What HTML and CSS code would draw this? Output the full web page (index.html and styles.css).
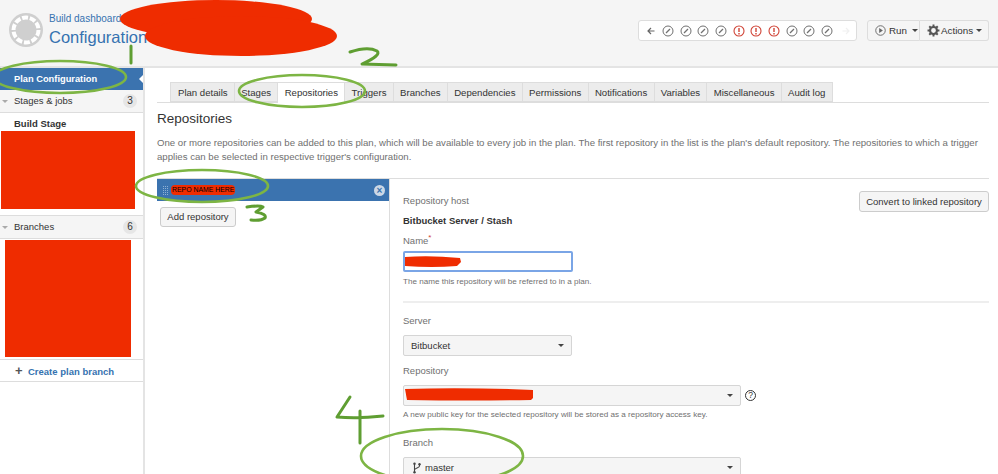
FILE: index.html
```html
<!DOCTYPE html>
<html lang="en">
<head>
    <meta charset="utf-8">
    <title>Configuration</title>
    <link rel="stylesheet" href="styles.css">
</head>
<body>
    <svg class="icon-defs" width="0" height="0">
        <symbol id="ok" viewBox="0 0 12 12">
            <circle cx="6" cy="6" r="5" fill="none" stroke="#707070" stroke-width="1"/>
            <path d="M4 8l4-4" stroke="#707070" stroke-width="1.3"/>
        </symbol>
        <symbol id="fail" viewBox="0 0 12 12">
            <circle cx="6" cy="6" r="5" fill="none" stroke="#d04437" stroke-width="1.1"/>
            <path d="M6 3v4M6 8v1.4" stroke="#d04437" stroke-width="1.4"/>
        </symbol>
    </svg>

    <header class="top">
        <div class="plan-logo">
            <svg width="34" height="34" viewBox="0 0 34 34">
                <circle cx="17" cy="17" r="17" fill="#cfcfcf"/>
                <circle cx="17" cy="17" r="12.5" fill="none" stroke="#fff" stroke-width="4" stroke-dasharray="6 1.8"/>
                <circle cx="17" cy="17" r="8" fill="#cfcfcf"/>
            </svg>
        </div>
        <div class="plan-title">
            <a class="crumb" href="#">Build dashboard</a>
            <h1>Configuration</h1>
        </div>
        <div class="top-right">
            <div class="history">
                <svg class="arrow" viewBox="0 0 10 10"><path d="M8.5 5H2M5 2L2 5l3 3" fill="none" stroke="#666" stroke-width="1.2"/></svg>
                <svg class="st"><use href="#ok"/></svg>
                <svg class="st"><use href="#ok"/></svg>
                <svg class="st"><use href="#ok"/></svg>
                <svg class="st"><use href="#ok"/></svg>
                <svg class="st"><use href="#fail"/></svg>
                <svg class="st"><use href="#fail"/></svg>
                <svg class="st"><use href="#fail"/></svg>
                <svg class="st"><use href="#ok"/></svg>
                <svg class="st"><use href="#ok"/></svg>
                <svg class="st"><use href="#ok"/></svg>
                <svg class="arrow next" viewBox="0 0 10 10"><path d="M1.5 5H8M5 2l3 3-3 3" fill="none" stroke="#f0f0f0" stroke-width="1.2"/></svg>
            </div>
            <div class="btn-group">
                <button class="tool-btn">
                    <svg width="11" height="11" viewBox="0 0 12 12"><circle cx="6" cy="6" r="5.2" fill="none" stroke="#666"/><path d="M4.6 3.4v5.2L8.6 6z" fill="#666"/></svg>
                    Run <i class="caret"></i>
                </button>
                <button class="tool-btn">
                    <svg width="13" height="13" viewBox="0 0 12 12"><circle cx="6" cy="6" r="3.2" fill="none" stroke="#555" stroke-width="2"/><path d="M6 .5v2M6 9.5v2M.5 6h2M9.5 6h2M2.1 2.1l1.4 1.4M8.5 8.5l1.4 1.4M2.1 9.9l1.4-1.4M8.5 3.5l1.4-1.4" stroke="#555" stroke-width="1.8"/></svg>
                    Actions <i class="caret"></i>
                </button>
            </div>
        </div>
    </header>

    <div class="page">
        <nav class="side">
            <a class="side-active" href="#">Plan Configuration</a>
            <div class="side-head"><i class="side-caret"></i>Stages &amp; jobs<span class="count">3</span></div>
            <div class="stage-list">
                <strong>Build Stage</strong>
            </div>
            <div class="side-head"><i class="side-caret"></i>Branches<span class="count">6</span></div>
            <div class="branch-list"></div>
            <a class="create-branch" href="#"><span class="plus">+</span>Create plan branch</a>
        </nav>

        <main class="main">
            <ul class="tabs">
                <li>Plan details</li>
                <li>Stages</li>
                <li class="current">Repositories</li>
                <li>Triggers</li>
                <li>Branches</li>
                <li>Dependencies</li>
                <li>Permissions</li>
                <li>Notifications</li>
                <li>Variables</li>
                <li>Miscellaneous</li>
                <li>Audit log</li>
            </ul>
            <h2>Repositories</h2>
            <p class="intro">One or more repositories can be added to this plan, which will be available to every job in the plan. The first repository in the list is the plan's default repository. The repositories to which a trigger applies can be selected in respective trigger's configuration.</p>

            <div class="repo-panel">
                <div class="repo-list">
                    <div class="repo-item">
                        <i class="grip"></i>
                        <span class="repo-name">REPO NAME HERE</span>
                        <span class="repo-close">&#215;</span>
                    </div>
                    <button class="btn add-repo">Add repository</button>
                </div>

                <form class="repo-form">
                    <button type="button" class="btn convert">Convert to linked repository</button>
                    <div class="label">Repository host</div>
                    <div class="host">Bitbucket Server / Stash</div>
                    <div class="label">Name<sup>*</sup></div>
                    <div class="text-input"></div>
                    <div class="hint">The name this repository will be referred to in a plan.</div>
                    <hr>
                    <div class="label select-label">Server</div>
                    <div class="select short">Bitbucket<i class="caret"></i></div>
                    <div class="label select-label">Repository</div>
                    <div class="select-row">
                        <div class="select long"><i class="caret"></i></div>
                        <span class="help">?</span>
                    </div>
                    <div class="hint key-hint">A new public key for the selected repository will be stored as a repository access key.</div>
                    <div class="label select-label branch-label">Branch</div>
                    <div class="select long">
                        <span class="branch-name">
                            <svg width="10" height="12" viewBox="0 0 10 12"><path d="M2.5 1.5v9M7.5 2.5v1.5C7.5 6 2.5 6 2.5 8" fill="none" stroke="#444" stroke-width="1.1"/><circle cx="2.5" cy="1.8" r="1.2" fill="#444"/><circle cx="7.5" cy="2.2" r="1.2" fill="#444"/><circle cx="2.5" cy="10.2" r="1.2" fill="#444"/></svg>
                            master
                        </span>
                        <i class="caret"></i>
                    </div>
                </form>
            </div>
        </main>
    </div>

    <!-- redactions and hand drawn notes sit over the page -->
    <svg class="overlay" width="998" height="474" viewBox="0 0 998 474">
        <g fill="#ef2c00">
            <ellipse cx="216" cy="19" rx="96" ry="19"/>
            <ellipse cx="241" cy="36" rx="96" ry="20"/>
            <rect x="1" y="131" width="134" height="78"/>
            <rect x="5" y="240" width="126" height="117"/>
            <path d="M405 257q25-2 55 1l1 4-4 4q-25 2-52 0z"/>
            <path d="M405 389q60-2 128 1v8l-2 2q-60 1-124 0z"/>
        </g>
        <g fill="none" stroke="#7db544" stroke-width="2.6">
            <ellipse cx="60" cy="77" rx="66" ry="16"/>
            <ellipse cx="302" cy="91" rx="63" ry="16"/>
            <ellipse cx="202" cy="186" rx="66" ry="16"/>
            <ellipse cx="442" cy="456" rx="81" ry="27"/>
        </g>
        <g fill="none" stroke="#5f9e32" stroke-width="3" stroke-linecap="round" stroke-linejoin="round">
            <path d="M131 46v17"/>
            <path d="M350 52q18-6 27-1 5 4-15 13l34 1"/>
            <path d="M247 207q13-2 16 0l-7 5q11 2 9 6-4 3-14 2"/>
            <path d="M350 397l-13 20q20 2 46-1M360 411v32"/>
        </g>
    </svg>
</body>
</html>
```

FILE: styles.css
```css
:root {
    --blue: #3b73af;
    --link: #3572b0;
    --text: #333;
    --muted: #707070;
    --line: #ddd;
    --panel: #f5f5f5;
}

* {
    box-sizing: border-box;
}

html, body {
    height: 474px;
    overflow: hidden;
}

body {
    margin: 0;
    background: #fff;
    color: var(--text);
    font-family: "Liberation Sans", Arial, sans-serif;
    font-size: 9.5px;
    line-height: 14px;
}

.icon-defs {
    display: block;
    height: 0;
}

.top {
    display: flex;
    height: 68px;
    padding: 13px 9px 0 9px;
    background: var(--panel);
    border-bottom: 2px solid #e4e4e4;
}

.plan-logo {
    width: 40px;
    height: 34px;
}

.plan-title {
    margin-top: -1px;
}

.crumb {
    display: block;
    color: var(--link);
    font-size: 10px;
    line-height: 14px;
    text-decoration: none;
}

h1 {
    margin: 0;
    color: var(--link);
    font-size: 16.5px;
    font-weight: normal;
    line-height: 22px;
}

.top-right {
    display: flex;
    gap: 10px;
    margin-left: auto;
    margin-top: 7px;
    height: 21px;
}

.history {
    display: flex;
    align-items: center;
    width: 219px;
    height: 21px;
    padding: 0 7px;
    background: #fff;
    border: 1px solid var(--line);
    border-radius: 3px;
}

.arrow {
    flex: none;
    width: 10px;
    height: 10px;
    margin-right: 6px;
}

.arrow.next {
    margin: 0 0 0 2px;
}

.st {
    flex: none;
    width: 12px;
    height: 12px;
    margin-right: 5.67px;
}

.btn-group {
    display: flex;
}

.tool-btn {
    display: flex;
    align-items: center;
    gap: 3px;
    height: 21px;
    padding: 0 7px;
    background: var(--panel);
    border: 1px solid var(--line);
    color: var(--text);
    font: inherit;
    font-size: 9.8px;
}

.tool-btn svg {
    flex: none;
}

.tool-btn:first-child {
    width: 53px;
    border-radius: 3px 0 0 3px;
}

.tool-btn:last-child {
    width: 69px;
    padding: 0 4px 0 7px;
    gap: 1px;
    border-left: 0;
    border-radius: 0 3px 3px 0;
}

.caret {
    display: inline-block;
    margin-left: 2px;
    border-top: 3px solid #444;
    border-left: 3px solid transparent;
    border-right: 3px solid transparent;
}

.page {
    display: flex;
    height: 406px;
}

.side {
    flex: none;
    width: 145px;
    border-right: 2px solid #e4e4e4;
}

.side-active {
    position: relative;
    display: block;
    height: 22px;
    padding-left: 14px;
    background: var(--blue);
    color: #fff;
    font-size: 9.3px;
    font-weight: bold;
    line-height: 22px;
    text-decoration: none;
}

.side-active::after {
    content: "";
    position: absolute;
    right: 0;
    top: 7px;
    border-right: 4px solid #fff;
    border-top: 4px solid transparent;
    border-bottom: 4px solid transparent;
}

.side-head {
    display: flex;
    align-items: center;
    height: 23px;
    padding: 0 6px 0 2px;
    background: var(--panel);
    border-bottom: 1px solid var(--line);
}

.side-caret {
    width: 0;
    margin-right: 6px;
    border-top: 3px solid #aaa;
    border-left: 3px solid transparent;
    border-right: 3px solid transparent;
}

.count {
    width: 14px;
    height: 14px;
    margin-left: auto;
    background: #e6e6e6;
    border-radius: 50%;
    font-size: 10px;
    line-height: 14px;
    text-align: center;
}

.stage-list {
    height: 103px;
    padding: 4px 14px;
    border-bottom: 1px solid var(--line);
}

.branch-list {
    height: 120px;
}

.create-branch {
    display: block;
    height: 23px;
    padding-left: 15px;
    border-top: 1px solid var(--line);
    border-bottom: 1px solid var(--line);
    color: var(--link);
    font-weight: bold;
    line-height: 21px;
    text-decoration: none;
}

.plus {
    display: inline-block;
    width: 13px;
    color: #555;
    font-size: 13px;
}

.main {
    flex: 1;
    min-width: 0;
    padding: 14px 9px 0 12px;
}

.tabs {
    display: flex;
    height: 21px;
    margin: 0;
    padding: 0 0 0 13px;
    border-bottom: 1px solid var(--line);
    font-size: 9.6px;
    list-style: none;
}

.tabs li {
    height: 20px;
    padding: 0 6.3px;
    background: #ececec;
    border: 1px solid var(--line);
    border-left: 0;
    line-height: 19px;
    white-space: nowrap;
}

.tabs li:first-child {
    padding-left: 7px;
    border-left: 1px solid var(--line);
}

.tabs li.current {
    height: 21px;
    background: #fff;
    border-bottom: 0;
}

h2 {
    margin: 7px 0 8px;
    font-size: 13.5px;
    font-weight: normal;
    line-height: 18px;
}

.intro {
    margin: 0;
    color: var(--muted);
    font-size: 9.65px;
}

.repo-panel {
    display: flex;
    margin-top: 14px;
    height: 300px;
    border-top: 1px solid var(--line);
}

.repo-list {
    flex: none;
    width: 233px;
    border-right: 1px solid var(--line);
}

.repo-item {
    display: flex;
    align-items: center;
    height: 22px;
    padding: 0 4px 0 6px;
    background: var(--blue);
}

.grip {
    flex: none;
    width: 6px;
    height: 10px;
    margin-right: 2px;
    background:
        repeating-linear-gradient(0deg, transparent 0 1px, var(--blue) 1px 2px),
        repeating-linear-gradient(90deg, #8fb0d4 0 1px, transparent 1px 2px);
}

.repo-name {
    padding: 0 1px;
    background: #ef2c00;
    border-radius: 4px;
    color: #000;
    font-size: 6.9px;
    line-height: 10px;
    white-space: nowrap;
}

.repo-close {
    width: 11px;
    height: 11px;
    margin-left: auto;
    background: #ccd8e6;
    border-radius: 50%;
    color: var(--blue);
    font-size: 10px;
    font-weight: bold;
    line-height: 11px;
    text-align: center;
}

.btn {
    height: 20px;
    padding: 0 6px;
    background: var(--panel);
    border: 1px solid #ccc;
    border-radius: 3px;
    color: var(--text);
    font: inherit;
    white-space: nowrap;
}

.add-repo {
    display: block;
    width: 76px;
    margin: 6px 0 0 3px;
}

.repo-form {
    position: relative;
    flex: 1;
    padding: 15px 0 0 13px;
}

.convert {
    position: absolute;
    right: 0;
    top: 12px;
    width: 130px;
    height: 21px;
    padding: 0;
}

.label {
    margin-bottom: 3px;
    color: var(--muted);
}

.label sup {
    color: #d04437;
    font-size: 8px;
    line-height: 0;
}

.select-label {
    margin-bottom: 7px;
}

.host {
    margin: 6px 0;
    color: var(--text);
    font-weight: bold;
}

.text-input {
    width: 170px;
    height: 21px;
    border: 2px solid #7aa5e6;
    border-radius: 2px;
}

.hint {
    margin-top: 4px;
    color: var(--muted);
    font-size: 8.1px;
    line-height: 12px;
}

.key-hint {
    margin-top: 3px;
}

hr {
    height: 2px;
    margin: 13px 0 11px;
    background: #eee;
    border: 0;
}

.select {
    display: flex;
    align-items: center;
    height: 21px;
    padding: 0 7px;
    background: var(--panel);
    border: 1px solid #d5d5d5;
    border-radius: 2px;
}

.select .caret {
    margin-left: auto;
}

.select.short {
    width: 169px;
    margin-bottom: 8px;
}

.select.long {
    width: 338px;
}

.select-row {
    display: flex;
    align-items: center;
    gap: 4px;
}

.help {
    width: 11px;
    height: 11px;
    border: 1px solid #333;
    border-radius: 50%;
    font-size: 8.5px;
    line-height: 9px;
    text-align: center;
}

.branch-label {
    margin-top: 15px;
}

.branch-name {
    display: flex;
    align-items: center;
    gap: 3px;
    margin-left: 1px;
}

.overlay {
    position: absolute;
    left: 0;
    top: 0;
    pointer-events: none;
}
```
